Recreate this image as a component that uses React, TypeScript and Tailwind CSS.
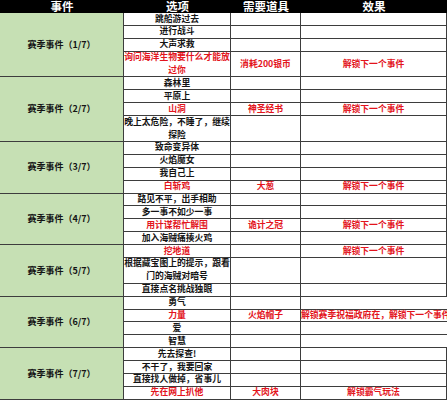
import React from "react";

type Opt = { t: string[]; red?: boolean; item?: string; eff?: string };
type Ev = { name: string; opts: Opt[] };

const events: Ev[] = [
  {
    name: "赛季事件（1/7）",
    opts: [
      { t: ["跳船游过去"] },
      { t: ["进行战斗"] },
      { t: ["大声求救"] },
      { t: ["询问海洋生物要什么才能放", "过你"], red: true, item: "消耗200银币", eff: "解锁下一个事件" },
    ],
  },
  {
    name: "赛季事件（2/7）",
    opts: [
      { t: ["森林里"] },
      { t: ["平原上"] },
      { t: ["山洞"], red: true, item: "神圣经书", eff: "解锁下一个事件" },
      { t: ["晚上太危险，不睡了，继续", "探险"] },
    ],
  },
  {
    name: "赛季事件（3/7）",
    opts: [
      { t: ["致命变异体"] },
      { t: ["火焰魔女"] },
      { t: ["我自己上"] },
      { t: ["白斩鸡"], red: true, item: "大葱", eff: "解锁下一个事件" },
    ],
  },
  {
    name: "赛季事件（4/7）",
    opts: [
      { t: ["路见不平，出手相助"] },
      { t: ["多一事不如少一事"] },
      { t: ["用计谋帮忙解围"], red: true, item: "诡计之冠", eff: "解锁下一个事件" },
      { t: ["加入海贼痛揍火鸡"] },
    ],
  },
  {
    name: "赛季事件（5/7）",
    opts: [
      { t: ["挖地道"], red: true, item: "", eff: "解锁下一个事件" },
      { t: ["根据藏宝图上的提示，跟看", "门的海贼对暗号"] },
      { t: ["直接点名挑战独眼"] },
    ],
  },
  {
    name: "赛季事件（6/7）",
    opts: [
      { t: ["勇气"] },
      { t: ["力量"], red: true, item: "火焰帽子", eff: "解锁赛季祝福政府在，解锁下一个事件" },
      { t: ["爱"] },
      { t: ["智慧"] },
    ],
  },
  {
    name: "赛季事件（7/7）",
    opts: [
      { t: ["先去探查!"] },
      { t: ["不干了，我要回家"] },
      { t: ["直接找人做掉，省事儿"] },
      { t: ["先在网上扒他"], red: true, item: "大肉块", eff: "解锁霸气玩法" },
    ],
  },
];

function Cell({ className, children }: { className: string; children?: React.ReactNode }) {
  return (
    <div
      className={
        "flex flex-col items-center justify-center whitespace-nowrap border-b border-r border-[#3d3d3d] leading-[12.9px] " +
        className
      }
    >
      {children}
    </div>
  );
}

export default function App() {
  return (
    <div
      className="w-[447px] h-[400px] overflow-hidden bg-white font-bold text-[#141414]"
      style={{ fontFamily: '"Noto Sans CJK SC", "Noto Sans", sans-serif' }}
    >
      <div className="flex h-[13px] items-center bg-black text-[11.5px] leading-[13px] text-white">
        <div className="flex w-[124px] justify-center">事件</div>
        <div className="flex w-[107px] justify-center">选项</div>
        <div className="flex w-[70px] justify-center">需要道具</div>
        <div className="flex flex-1 justify-center">效果</div>
      </div>
      {events.map((ev) => (
        <div key={ev.name} className="flex">
          <div className="flex w-[124px] shrink-0 items-center justify-center border-b border-r border-[#3d3d3d] bg-[#c6e0b4] text-[9px]">
            {ev.name}
          </div>
          <div className="flex flex-1 flex-col text-[8.8px]">
            {ev.opts.map((o, i) => {
              const h = o.t.length > 1 ? "h-[25.8px]" : "h-[12.9px]";
              const color = o.red ? "text-[#e3141c]" : "";
              return (
                <div key={i} className={"flex " + h}>
                  <Cell className={"w-[107px] shrink-0 " + color}>
                    {o.t.map((l) => (
                      <span key={l}>{l}</span>
                    ))}
                  </Cell>
                  <Cell className="w-[70px] shrink-0 text-[#e3141c]">{o.item}</Cell>
                  <Cell className="flex-1 text-[#e3141c]">{o.eff}</Cell>
                </div>
              );
            })}
          </div>
        </div>
      ))}
    </div>
  );
}
